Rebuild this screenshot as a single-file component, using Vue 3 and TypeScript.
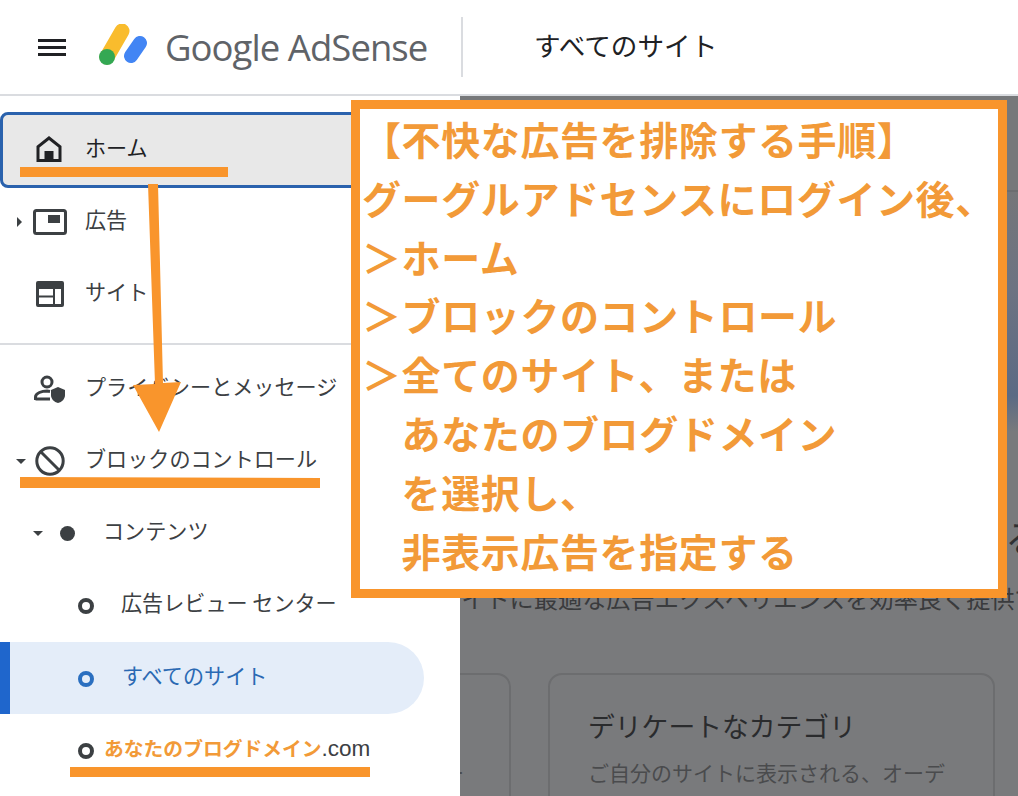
<script setup lang="ts">
const steps = [
  '【不快な広告を排除する手順】',
  'グーグルアドセンスにログイン後、',
  '＞ホーム',
  '＞ブロックのコントロール',
  '＞全てのサイト、または',
  '　あなたのブログドメイン',
  '　を選択し、',
  '　非表示広告を指定する',
]
</script>

<template>
  <div class="page">
    <header class="top">
      <svg class="menu" viewBox="0 0 28 20" width="28" height="20">
        <path d="M0 2h28v3H0zM0 9h28v3H0zM0 16h28v3H0z" fill="#202124" />
      </svg>
      <svg class="logo" viewBox="0 0 50 46" width="50" height="46">
        <path d="M8 33 L23 7" stroke="#f9bc2d" stroke-width="15" stroke-linecap="round" />
        <path d="M32 32 L41 19" stroke="#4285f4" stroke-width="14" stroke-linecap="round" />
        <circle cx="8" cy="33" r="8" fill="#34a853" />
      </svg>
      <div class="brand">Google AdSense</div>
      <div class="vrule"></div>
      <div class="crumb">すべてのサイト</div>
    </header>

    <div class="body">
      <nav class="side">
        <div class="row home">
          <svg class="ico" viewBox="0 0 26 28" width="26" height="28">
            <path d="M13 1 L25.5 11 V27 H0.5 V11 Z M3.5 12.5 V24 H22.5 V12.5 L13 5 Z" fill="#202124" fill-rule="evenodd" />
            <rect x="8.5" y="16" width="9" height="9" fill="#202124" />
          </svg>
          <span>ホーム</span>
        </div>
        <div class="row">
          <i class="caret right"></i>
          <svg class="ico" viewBox="0 0 34 28" width="34" height="28">
            <rect x="1.5" y="2.5" width="31" height="23" rx="2" fill="none" stroke="#3c4043" stroke-width="3" />
            <rect x="15" y="7" width="12" height="8" fill="#3c4043" />
          </svg>
          <span>広告</span>
        </div>
        <div class="row">
          <svg class="ico" viewBox="0 0 28 26" width="28" height="26">
            <path d="M2 0h24a2 2 0 0 1 2 2v22a2 2 0 0 1-2 2H2a2 2 0 0 1-2-2V2a2 2 0 0 1 2-2z M3 8v6.5h14V8z M3 16.5V23h14v-6.5z M19 8v15h6V8z" fill="#3c4043" fill-rule="evenodd" />
          </svg>
          <span>サイト</span>
        </div>

        <hr class="divider" />

        <div class="row">
          <svg class="ico" viewBox="0 0 32 28" width="32" height="28">
            <circle cx="13" cy="7" r="5" fill="none" stroke="#3c4043" stroke-width="3" />
            <path d="M1.5 25 V22 C1.5 18 8 16 13 16 L16 16.5 M1.5 24 H16" fill="none" stroke="#3c4043" stroke-width="3" />
            <path d="M24 12 L31 15 V20 C31 24 28 27 24 28 C20 27 17 24 17 20 V15 Z" fill="#3c4043" />
          </svg>
          <span>プライバシーとメッセージ</span>
        </div>
        <div class="row">
          <i class="caret down"></i>
          <svg class="ico" viewBox="0 0 30 30" width="30" height="30">
            <circle cx="15" cy="15" r="13.2" fill="none" stroke="#3c4043" stroke-width="3" />
            <path d="M6 6 L24 24" stroke="#3c4043" stroke-width="3" />
          </svg>
          <span>ブロックのコントロール</span>
        </div>
        <div class="row sub">
          <i class="caret down"></i>
          <i class="dot"></i>
          <span>コンテンツ</span>
        </div>
        <div class="row leaf">
          <i class="ring"></i>
          <span>広告レビュー センター</span>
        </div>
        <div class="row leaf active">
          <i class="ring"></i>
          <span>すべてのサイト</span>
        </div>
        <div class="row leaf domain">
          <i class="ring"></i>
          <span><b>あなたのブログドメイン</b><em>.com</em></span>
        </div>
      </nav>

      <main class="main">
        <div class="band"></div>
        <div class="banner"></div>
        <p class="big">る</p>
        <p class="lead">サイトに最適な広告エクスペリエンスを効率良く提供で</p>
        <div class="cards">
          <div class="card stub"><p>ー</p></div>
          <div class="card">
            <h3>デリケートなカテゴリ</h3>
            <p>ご自分のサイトに表示される、オーデ</p>
          </div>
        </div>
      </main>
    </div>

    <section class="note">
      <div v-for="s in steps" :key="s" class="line">{{ s }}</div>
    </section>

    <svg class="marks" viewBox="0 0 1018 796" width="1018" height="796">
      <g fill="#f9952c">
        <path d="M20 167 H228 V177 H20 Z" />
        <path d="M148 184 H158 L163 383 L181 382 L159 432 L133 385 L155 384 Z" />
        <path d="M20 477 L320 478 V488 H20 Z" />
        <path d="M70 767 H370 V777 H70 Z" />
      </g>
    </svg>
  </div>
</template>

<style>
body { margin: 0; }
</style>

<style scoped>
.page {
  position: relative;
  width: 1018px;
  height: 796px;
  overflow: hidden;
  background: #fff;
  font-family: "Noto Sans CJK JP", "Noto Sans", sans-serif;
  color: #3c4043;
}
.top {
  height: 94px;
  display: flex;
  align-items: center;
  border-bottom: 2px solid #dadce0;
}
.menu { margin-left: 38px; flex: none; }
.logo { margin-left: 33px; flex: none; }
.brand {
  margin-left: 16px;
  width: 296px;
  font: 400 36.5px "Open Sans", sans-serif;
  letter-spacing: -0.95px;
  color: #5f6368;
  white-space: nowrap;
}
.vrule { width: 2px; height: 60px; background: #dadce0; }
.crumb { margin: 0 0 6px 71px; font-size: 26.6px; color: #202124; }
.body { display: flex; height: 700px; }
.side { width: 460px; flex: none; padding-top: 18px; box-sizing: border-box; }
.row {
  position: relative;
  height: 72px;
  display: flex;
  align-items: center;
  font-size: 21.1px;
  padding-left: 85px;
  white-space: nowrap;
  box-sizing: border-box;
}
.row span { margin-bottom: 6px; }
.row .ico { position: absolute; top: 50%; left: 50px; transform: translate(-50%, -50%); }
.home {
  height: 76px;
  margin: -2px 0;
  background: #e8e8e8;
  border: 3px solid #2a62ad;
  border-radius: 8px;
  padding-left: 82px;
  color: #202124;
}
.home .ico { left: 46px; top: 49%; }
.divider { margin: 13px 0 8px; border: 0; border-top: 2px solid #dadce0; }
.caret { position: absolute; width: 0; height: 0; border-style: solid; border-color: transparent; }
.caret.right { left: 17px; top: 31px; border-width: 5px 0 5px 5px; border-left-color: #3c4043; }
.caret.down { left: 16px; top: 34px; border-width: 5px 5px 0; border-top-color: #3c4043; }
.sub { padding-left: 103px; }
.sub .caret { left: 33px; }
.dot {
  position: absolute; left: 60px; top: 29px;
  width: 15px; height: 15px; border-radius: 50%; background: #3c4043;
}
.leaf { padding-left: 121px; }
.ring {
  position: absolute; left: 78px; top: 29px;
  width: 16px; height: 16px; border-radius: 50%;
  border: 4px solid #3c4043; box-sizing: border-box;
}
.active {
  margin-top: 1px;
  width: 424px;
  background: #e4edf9;
  border-left: 10px solid #1f66cc;
  border-radius: 0 36px 36px 0;
  padding-left: 112px;
  color: #2a69b3;
}
.active .ring { left: 68px; border-color: #2a6fc0; }
.domain { padding-left: 104px; font-size: 19.8px; }
.domain b { color: #f29a38; font-weight: 700; }
.domain em { font: 400 22.5px "Liberation Sans", sans-serif; color: #3c4043; }
.main {
  position: relative;
  flex: 1;
  background: #797a7c;
  overflow: hidden;
}
.band { height: 94px; border-bottom: 2px solid #6c6d70; background: #77787a; }
.banner {
  height: 240px;
  background: linear-gradient(180deg, #757679 0%, #6d7382 40%, #5b6a84 85%, #797a7c 100%);
}
.big {
  position: absolute; margin: 0; left: 545px; top: 412px;
  font-size: 38px; color: #2f3032;
}
.lead {
  margin: 0; position: absolute; left: -23px; top: 484px;
  font-size: 24.2px; white-space: nowrap; color: #3a3b3d;
}
.cards {
  position: absolute; top: 577px; left: -60px;
  display: flex; gap: 37px;
}
.card {
  width: 447px; height: 300px;
  border: 2px solid #6c6d6f;
  border-radius: 14px;
  box-sizing: border-box;
  padding: 31px 38px;
}
.stub { width: 111px; }
.card h3 { margin: 0; font-size: 26.8px; font-weight: 400; color: #2a2b2d; }
.card p { margin: 12px 0 0; font-size: 21px; color: #4a4b4d; white-space: nowrap; }
.card.stub p { margin: 51px 0 0 3px; }
.note {
  position: absolute;
  left: 351px; top: 100px;
  width: 656px; height: 498px;
  box-sizing: border-box;
  border: 9px solid #f9952c;
  background: #fff;
  padding: 0 0 0 2px;
  color: #f29a38;
  font-size: 39px;
  font-weight: 700;
  letter-spacing: 0.6px;
}
.line { height: 58.8px; line-height: 58.8px; white-space: nowrap; }
.marks { position: absolute; left: 0; top: 0; pointer-events: none; }
</style>
